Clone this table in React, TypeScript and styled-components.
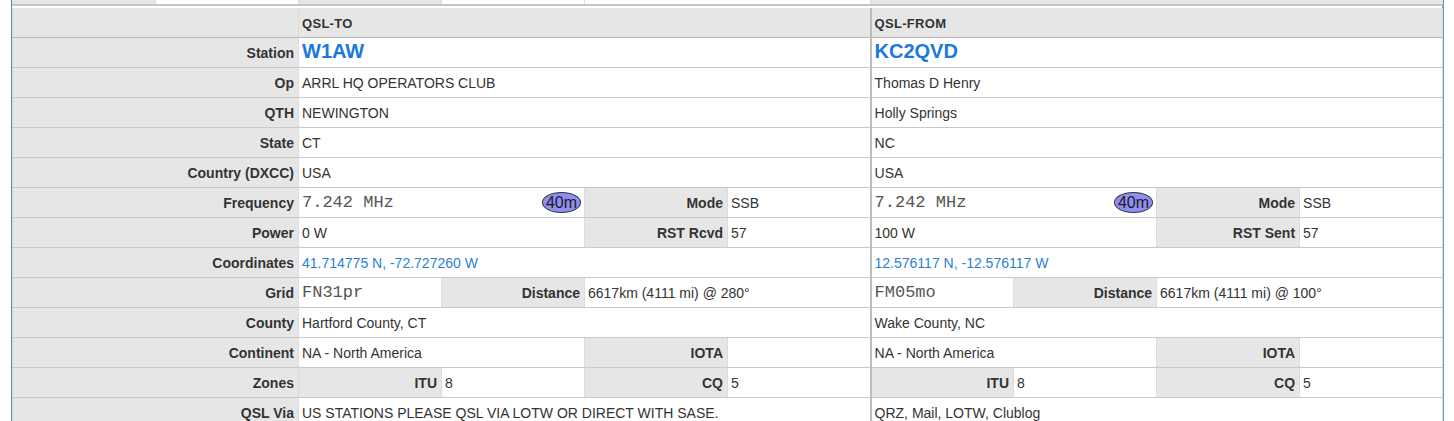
import * as React from "react";
import styled, { createGlobalStyle } from "styled-components";

const GlobalStyle = createGlobalStyle`
  body {
    margin: 0;
    background: #fff;
    font-family: "Liberation Sans", Arial, sans-serif;
    color: #333;
  }
`;

const Page = styled.div`
  padding-left: 11px;
  width: 1433px;
`;

const Frame = styled.div`
  border-left: 1px solid #5b8ea6;
  border-right: 2px solid #6c9db3;
  width: 1430px;
`;

const Grid = styled.table`
  width: 1430px;
  table-layout: fixed;
  border-collapse: collapse;
  font-size: 14px;
`;

const PrevGrid = styled(Grid)`
  margin-bottom: 2px;
  border-bottom: 2px solid #c4c4c4;
`;

const Cell = styled.td<{ $gray?: boolean; $split?: boolean }>`
  height: 29px;
  padding: 0 4px 0 3px;
  border: 1px solid #c9c9c9;
  border-left-color: #dcdcdc;
  border-right-color: #dcdcdc;
  background: ${(p) => (p.$gray ? "#e6e6e6" : "#fff")};
  white-space: nowrap;
  overflow: hidden;
  vertical-align: middle;
  ${(p) => p.$split && "border-left: 2px solid #bdbdbd;"}
  tr:first-child > & {
    border-top: none;
  }
`;

const StubCell = styled(Cell)`
  height: 4px;
  padding: 0;
  border-top: none;
  border-bottom: none;
`;

const Label = styled(Cell)`
  font-weight: bold;
  text-align: right;
  background: #e6e6e6;
`;

const Head = styled(Cell)`
  height: 28px;
  padding-top: 1px;
  font-weight: bold;
  font-size: 13px;
  letter-spacing: 0.3px;
  background: #e6e6e6;
  border-bottom-color: #b9b9b9;
`;

const Call = styled.a`
  color: #1b78dc;
  font-weight: bold;
  font-size: 20px;
  text-decoration: none;
  position: relative;
  top: -1px;
`;

const Link = styled.a`
  color: #2a7fd4;
  text-decoration: none;
`;

const Mono = styled.span`
  font-family: "Liberation Mono", "Courier New", monospace;
  font-size: 17px;
  color: #555;
`;

const FreqRow = styled.div`
  display: flex;
  align-items: center;
  justify-content: space-between;
`;

const Band = styled.span`
  display: inline-block;
  padding: 0 3px;
  height: 19px;
  line-height: 19px;
  border: 1px solid #333;
  border-radius: 50%;
  background: #8e8ef4;
  color: #1c1c1c;
  font-size: 16px;
  margin-right: -1px;
`;

type Side = {
  call: string;
  op: string;
  qth: string;
  state: string;
  country: string;
  power: string;
  rstLabel: string;
  rst: string;
  coords: string;
  grid: string;
  bearing: string;
  county: string;
  continent: string;
  via: string;
};

const to: Side = {
  call: "W1AW",
  op: "ARRL HQ OPERATORS CLUB",
  qth: "NEWINGTON",
  state: "CT",
  country: "USA",
  power: "0 W",
  rstLabel: "RST Rcvd",
  rst: "57",
  coords: "41.714775 N, -72.727260 W",
  grid: "FN31pr",
  bearing: "280°",
  county: "Hartford County, CT",
  continent: "NA - North America",
  via: "US STATIONS PLEASE QSL VIA LOTW OR DIRECT WITH SASE.",
};

const from: Side = {
  call: "KC2QVD",
  op: "Thomas D Henry",
  qth: "Holly Springs",
  state: "NC",
  country: "USA",
  power: "100 W",
  rstLabel: "RST Sent",
  rst: "57",
  coords: "12.576117 N, -12.576117 W",
  grid: "FM05mo",
  bearing: "100°",
  county: "Wake County, NC",
  continent: "NA - North America",
  via: "QRZ, Mail, LOTW, Clublog",
};

const sides = [to, from];

function Full({ pick }: { pick: (s: Side) => React.ReactNode }) {
  return (
    <>
      {sides.map((s, i) => (
        <Cell key={i} colSpan={4} $split={i === 1}>
          {pick(s)}
        </Cell>
      ))}
    </>
  );
}

export default function App() {
  const cols = Array.from({ length: 10 }, (_, i) => <col key={i} style={{ width: 143 }} />);
  return (
    <Page>
      <GlobalStyle />
      <Frame>
        <PrevGrid>
          <colgroup>{cols}</colgroup>
          <tbody>
            <tr>
              <StubCell $gray />
              <StubCell />
              <StubCell $gray />
              <StubCell />
              <StubCell colSpan={2} />
              <StubCell colSpan={4} $gray />
            </tr>
          </tbody>
        </PrevGrid>
        <Grid>
          <colgroup>{cols}</colgroup>
          <tbody>
            <tr>
              <Head colSpan={2} />
              <Head colSpan={4}>QSL-TO</Head>
              <Head colSpan={4} $split>
                QSL-FROM
              </Head>
            </tr>
            <tr>
              <Label colSpan={2}>Station</Label>
              <Full pick={(s) => <Call href="#">{s.call}</Call>} />
            </tr>
            <tr>
              <Label colSpan={2}>Op</Label>
              <Full pick={(s) => s.op} />
            </tr>
            <tr>
              <Label colSpan={2}>QTH</Label>
              <Full pick={(s) => s.qth} />
            </tr>
            <tr>
              <Label colSpan={2}>State</Label>
              <Full pick={(s) => s.state} />
            </tr>
            <tr>
              <Label colSpan={2}>Country (DXCC)</Label>
              <Full pick={(s) => s.country} />
            </tr>
            <tr>
              <Label colSpan={2}>Frequency</Label>
              {sides.map((s, i) => (
                <React.Fragment key={i}>
                  <Cell colSpan={2} $split={i === 1}>
                    <FreqRow>
                      <Mono>7.242 MHz</Mono>
                      <Band>40m</Band>
                    </FreqRow>
                  </Cell>
                  <Label>Mode</Label>
                  <Cell>SSB</Cell>
                </React.Fragment>
              ))}
            </tr>
            <tr>
              <Label colSpan={2}>Power</Label>
              {sides.map((s, i) => (
                <React.Fragment key={i}>
                  <Cell colSpan={2} $split={i === 1}>
                    {s.power}
                  </Cell>
                  <Label>{s.rstLabel}</Label>
                  <Cell>{s.rst}</Cell>
                </React.Fragment>
              ))}
            </tr>
            <tr>
              <Label colSpan={2}>Coordinates</Label>
              <Full pick={(s) => <Link href="#">{s.coords}</Link>} />
            </tr>
            <tr>
              <Label colSpan={2}>Grid</Label>
              {sides.map((s, i) => (
                <React.Fragment key={i}>
                  <Cell $split={i === 1}>
                    <Mono>{s.grid}</Mono>
                  </Cell>
                  <Label>Distance</Label>
                  <Cell colSpan={2}>6617km (4111 mi) @ {s.bearing}</Cell>
                </React.Fragment>
              ))}
            </tr>
            <tr>
              <Label colSpan={2}>County</Label>
              <Full pick={(s) => s.county} />
            </tr>
            <tr>
              <Label colSpan={2}>Continent</Label>
              {sides.map((s, i) => (
                <React.Fragment key={i}>
                  <Cell colSpan={2} $split={i === 1}>
                    {s.continent}
                  </Cell>
                  <Label>IOTA</Label>
                  <Cell />
                </React.Fragment>
              ))}
            </tr>
            <tr>
              <Label colSpan={2}>Zones</Label>
              {sides.map((s, i) => (
                <React.Fragment key={i}>
                  <Label $split={i === 1}>ITU</Label>
                  <Cell>8</Cell>
                  <Label>CQ</Label>
                  <Cell>5</Cell>
                </React.Fragment>
              ))}
            </tr>
            <tr>
              <Label colSpan={2}>QSL Via</Label>
              <Full pick={(s) => s.via} />
            </tr>
          </tbody>
        </Grid>
      </Frame>
    </Page>
  );
}
